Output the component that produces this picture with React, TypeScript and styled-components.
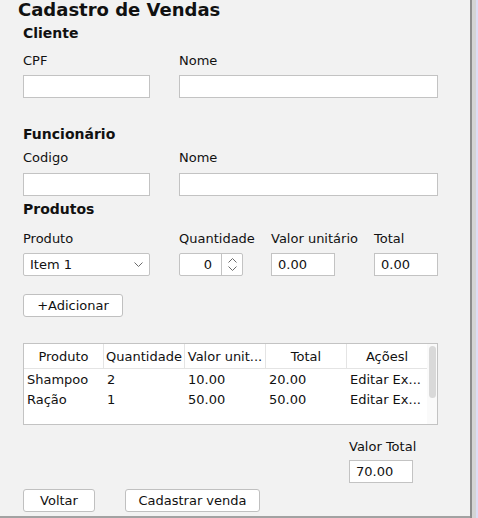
import React from 'react';
import styled, { createGlobalStyle } from 'styled-components';

const Global = createGlobalStyle`
  html, body { margin: 0; padding: 0; background: #f2f2f2; }
  body { font-family: "DejaVu Sans", "Liberation Sans", sans-serif; font-size: 13px; color: #111; }
  #root { width: 478px; height: 518px; }
`;

const Frame = styled.div`
  display: flex;
  width: 478px;
  height: 518px;
  overflow: hidden;
`;

const Panel = styled.div`
  width: 470px;
  height: 516px;
  background: #f2f2f2;
  border-bottom: 2px solid #a2a2a2;
  display: flex;
  flex-direction: column;
`;

const EdgeDark = styled.div`
  width: 2px;
  background: #8c8c8c;
`;
const EdgeLight = styled.div`
  width: 4px;
  background: #d4d4d4;
`;
const EdgeLav = styled.div`
  flex: 1;
  background: #dcdcf4;
`;

const Title = styled.h1`
  margin: 0 0 0 18px;
  font-size: 18px;
  font-weight: bold;
  line-height: 20px;
  height: 20px;
  color: #111;
`;

const Heading = styled.h2<{ $mt: number }>`
  margin: ${p => p.$mt}px 0 0 23px;
  font-size: 14px;
  font-weight: bold;
  line-height: 18px;
  height: 18px;
  color: #111;
`;

const FieldGrid = styled.div<{ $mt: number; $cols: string }>`
  display: grid;
  grid-template-columns: ${p => p.$cols};
  grid-template-rows: 16px 23px;
  row-gap: ${p => (p.$mt > 10 ? 6 : 7)}px;
  margin: ${p => p.$mt}px 0 0 23px;
`;

const Label = styled.span`
  line-height: 16px;
  white-space: nowrap;
`;

const TextBox = styled.div<{ $w: number }>`
  box-sizing: border-box;
  width: ${p => p.$w}px;
  height: 23px;
  background: #fff;
  border: 1px solid #c3c3c3;
  padding: 0 6px;
  display: flex;
  align-items: center;
  line-height: 16px;
`;

const Combo = styled.div`
  box-sizing: border-box;
  width: 127px;
  height: 23px;
  background: #fff;
  border: 1px solid #c3c3c3;
  border-radius: 2px;
  padding: 0 6px;
  display: flex;
  align-items: center;
  justify-content: space-between;
`;

const Spinner = styled.div`
  box-sizing: border-box;
  width: 64px;
  height: 23px;
  background: #fff;
  border: 1px solid #c3c3c3;
  border-radius: 2px;
  display: flex;
`;

const SpinValue = styled.div`
  flex: 1;
  display: flex;
  align-items: center;
  justify-content: flex-end;
  padding-right: 9px;
  border-right: 1px solid #c3c3c3;
`;

const SpinArrows = styled.div`
  width: 20px;
  display: flex;
  flex-direction: column;
  align-items: center;
  justify-content: center;
  gap: 3px;
`;

const Button = styled.button<{ $w: number }>`
  box-sizing: border-box;
  width: ${p => p.$w}px;
  height: 23px;
  background: #fff;
  border: 1px solid #c0c0c0;
  border-radius: 3px;
  font-family: inherit;
  font-size: 13px;
  color: #111;
  padding: 0;
  line-height: 16px;
`;

const ButtonRow = styled.div<{ $mt: number }>`
  display: flex;
  gap: 30px;
  margin: ${p => p.$mt}px 0 0 23px;
`;

const TableBox = styled.div`
  box-sizing: border-box;
  margin: 26px 0 0 23px;
  width: 415px;
  height: 82px;
  border: 1px solid #c3c3c3;
  background: #fff;
  display: flex;
`;

const TableArea = styled.div`
  width: 403px;
  display: flex;
  flex-direction: column;
`;

const HeaderRow = styled.div`
  display: flex;
  height: 24px;
  border-bottom: 1px solid #e4e4e4;
`;

const HeadCell = styled.div<{ $w: number; $last?: boolean }>`
  box-sizing: border-box;
  width: ${p => p.$w}px;
  border-right: ${p => (p.$last ? 'none' : '1px solid #e4e4e4')};
  display: flex;
  align-items: center;
  justify-content: center;
  white-space: nowrap;
  overflow: hidden;
`;

const BodyRow = styled.div`
  display: flex;
  height: 20px;
  align-items: center;
`;

const Cell = styled.div<{ $w: number }>`
  box-sizing: border-box;
  width: ${p => p.$w}px;
  padding-left: 3px;
  white-space: nowrap;
  overflow: hidden;
`;

const ScrollTrack = styled.div`
  width: 10px;
  background: #fafafa;
  display: flex;
  justify-content: center;
  padding-top: 2px;
`;

const ScrollThumb = styled.div`
  width: 7px;
  height: 52px;
  border-radius: 4px;
  background: #d9d9d9;
`;

const TotalGroup = styled.div`
  display: flex;
  flex-direction: column;
  align-items: flex-start;
  margin: 14px 0 0 349px;
  gap: 5px;
`;

const Chevron = ({ up, w = 9 }: { up?: boolean; w?: number }) => (
  <svg width={w} height={5} viewBox="0 0 9 5" style={{ display: 'block' }}>
    <polyline
      points={up ? '0.5,4.5 4.5,0.5 8.5,4.5' : '0.5,0.5 4.5,4.5 8.5,0.5'}
      fill="none"
      stroke="#6a6a6a"
      strokeWidth="1"
    />
  </svg>
);

const cols = [80, 81, 81, 81, 80];
const headers = ['Produto', 'Quantidade', 'Valor unit...', 'Total', 'Açõesl'];
const rows = [
  ['Shampoo', '2', '10.00', '20.00', 'Editar Ex...'],
  ['Ração', '1', '50.00', '50.00', 'Editar Ex...'],
];

export default function App() {
  return (
    <>
      <Global />
      <Frame>
        <Panel>
          <Title>Cadastro de Vendas</Title>

          <Heading $mt={4}>Cliente</Heading>
          <FieldGrid $mt={11} $cols="156px 259px">
            <Label>CPF</Label>
            <Label>Nome</Label>
            <TextBox $w={127} />
            <TextBox $w={259} />
          </FieldGrid>

          <Heading $mt={27}>Funcionário</Heading>
          <FieldGrid $mt={7} $cols="156px 259px">
            <Label>Codigo</Label>
            <Label>Nome</Label>
            <TextBox $w={127} />
            <TextBox $w={259} />
          </FieldGrid>

          <Heading $mt={4}>Produtos</Heading>
          <FieldGrid $mt={13} $cols="156px 92px 103px 64px">
            <Label>Produto</Label>
            <Label>Quantidade</Label>
            <Label>Valor unitário</Label>
            <Label>Total</Label>
            <Combo>
              <span>Item 1</span>
              <Chevron />
            </Combo>
            <Spinner>
              <SpinValue>0</SpinValue>
              <SpinArrows>
                <Chevron up />
                <Chevron />
              </SpinArrows>
            </Spinner>
            <TextBox $w={64}>0.00</TextBox>
            <TextBox $w={64}>0.00</TextBox>
          </FieldGrid>

          <ButtonRow $mt={18}>
            <Button $w={100}>+Adicionar</Button>
          </ButtonRow>

          <TableBox>
            <TableArea>
              <HeaderRow>
                {headers.map((h, i) => (
                  <HeadCell key={h} $w={cols[i]} $last={i === cols.length - 1}>
                    {h}
                  </HeadCell>
                ))}
              </HeaderRow>
              {rows.map((r, ri) => (
                <BodyRow key={ri}>
                  {r.map((c, ci) => (
                    <Cell key={ci} $w={cols[ci]}>
                      {c}
                    </Cell>
                  ))}
                </BodyRow>
              ))}
            </TableArea>
            <ScrollTrack>
              <ScrollThumb />
            </ScrollTrack>
          </TableBox>

          <TotalGroup>
            <Label>Valor Total</Label>
            <TextBox $w={64}>70.00</TextBox>
          </TotalGroup>

          <ButtonRow $mt={6}>
            <Button $w={72}>Voltar</Button>
            <Button $w={135}>Cadastrar venda</Button>
          </ButtonRow>
        </Panel>
        <EdgeDark />
        <EdgeLight />
        <EdgeLav />
      </Frame>
    </>
  );
}
